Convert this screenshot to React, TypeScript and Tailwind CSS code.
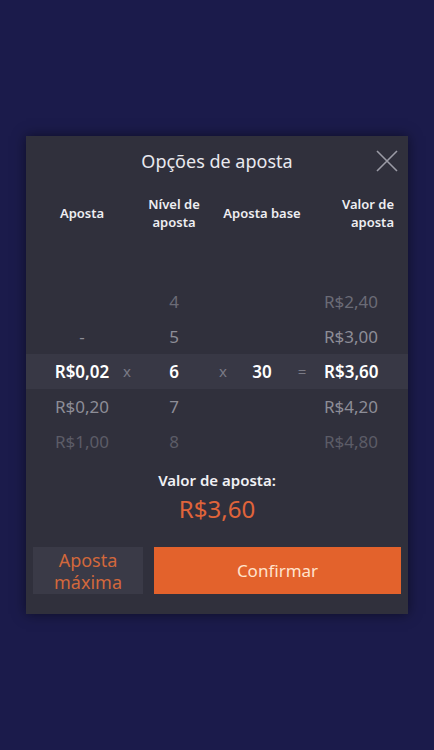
import React from "react";

const font = { fontFamily: '"Noto Sans", "Open Sans", sans-serif' };

type Row = { a: string; l: string; v: string; cls: string; sel?: boolean };

const rows: Row[] = [
  { a: "", l: "4", v: "R$2,40", cls: "text-[#6b6b76]" },
  { a: "-", l: "5", v: "R$3,00", cls: "text-[#8d8d97]" },
  { a: "R$0,02", l: "6", v: "R$3,60", cls: "text-white", sel: true },
  { a: "R$0,20", l: "7", v: "R$4,20", cls: "text-[#8d8d97]" },
  { a: "R$1,00", l: "8", v: "R$4,80", cls: "text-[#5c5c67]" },
];

export default function App() {
  return (
    <div
      className="w-[434px] h-[750px] bg-[#1b1b4b] flex items-center justify-center"
      style={font}
    >
      <div className="w-[382px] h-[478px] bg-[#30303c] flex flex-col shadow-[0_0_12px_rgba(0,0,0,0.5)]">
        <div className="relative h-[50px] flex items-center justify-center">
          <span className="text-[18px] text-[#e9e9ef]">Opções de aposta</span>
          <svg
            className="absolute right-[9px] top-[13px]"
            width="24"
            height="24"
            viewBox="0 0 24 24"
            fill="none"
            stroke="#9b9ba6"
            strokeWidth="1.6"
          >
            <path d="M2 2L22 22M22 2L2 22" />
          </svg>
        </div>
        <div className="h-[54px] grid grid-cols-[72px_18px_76px_22px_56px_24px_1fr] pl-[20px] items-center text-[13px] font-semibold text-[#eeeef2] leading-[18px]">
          <div className="flex justify-center whitespace-nowrap">Aposta</div>
          <div />
          <div className="flex justify-center text-center">
            Nível de
            <br />
            aposta
          </div>
          <div />
          <div className="flex justify-center whitespace-nowrap">Aposta base</div>
          <div />
          <div className="text-right pr-[14px]">
            Valor de
            <br />
            aposta
          </div>
        </div>
        <div className="h-[44px]" />
        <div className="flex flex-col">
          {rows.map((r, i) => (
            <div
              key={i}
              className={`h-[35px] grid grid-cols-[72px_18px_76px_22px_56px_24px_1fr] pl-[20px] items-center text-[17px] ${r.cls} ${
                r.sel ? "bg-[#383845] font-semibold" : ""
              }`}
            >
              <div className="flex justify-center whitespace-nowrap">{r.a}</div>
              <div className="flex justify-center text-[#7a7a85] font-normal text-[15px]">
                {r.sel ? "x" : ""}
              </div>
              <div className="flex justify-center">{r.l}</div>
              <div className="flex justify-center text-[#7a7a85] font-normal text-[15px]">
                {r.sel ? "x" : ""}
              </div>
              <div className="flex justify-center">{r.sel ? "30" : ""}</div>
              <div className="flex justify-center text-[#7a7a85] font-normal text-[15px]">
                {r.sel ? "=" : ""}
              </div>
              <div className="pl-[10px] whitespace-nowrap">{r.v}</div>
            </div>
          ))}
        </div>
        <div className="mt-[11px] text-center text-[15px] leading-[21px] font-semibold text-[#f0f0f4]">
          Valor de aposta:
        </div>
        <div className="mt-[2px] text-center text-[24px] leading-[32px] text-[#e0643a]">
          R$3,60
        </div>
        <div className="mt-[22px] px-[7px] flex gap-[11px] h-[47px]">
          <div className="w-[110px] bg-[#3a3a47] flex items-center justify-center text-center text-[18px] leading-[22px] text-[#d2683c]">
            Aposta
            <br />
            máxima
          </div>
          <div className="flex-1 bg-[#e3622c] flex items-center justify-center text-[17px] text-[#ffe3cc]">
            Confirmar
          </div>
        </div>
      </div>
    </div>
  );
}
